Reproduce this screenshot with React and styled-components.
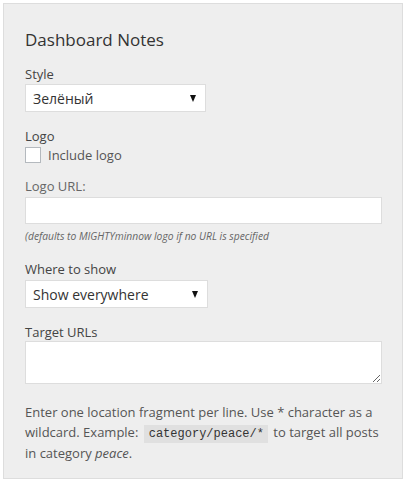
import React from "react";
import styled, { createGlobalStyle } from "styled-components";

const Global = createGlobalStyle`
  html, body { margin: 0; padding: 0; background: #fff; }
  body { font-family: "Open Sans", "Liberation Sans", sans-serif; color: #444; }
  * { box-sizing: border-box; }
`;

const Panel = styled.div`
  margin: 3px;
  width: 400px;
  height: 476px;
  background: #eee;
  border: 1px solid #ddd;
  padding: 24px 21px 0 21px;
`;

const Title = styled.h2`
  margin: 0;
  font-size: 17px;
  line-height: 24px;
  font-weight: 400;
  color: #333;
`;

const Field = styled.div`
  margin-top: ${(p) => p.$mt || 0}px;
  display: flex;
  flex-direction: column;
  align-items: flex-start;
`;

const Label = styled.div`
  font-size: 13px;
  line-height: 18px;
  color: ${(p) => (p.$light ? "#666" : "#444")};
  margin-bottom: ${(p) => p.$mb || 0}px;
`;

const SelectBox = styled.div`
  width: ${(p) => p.$w}px;
  height: 28px;
  background: #fff;
  border: 1px solid #ddd;
  display: flex;
  align-items: center;
  justify-content: space-between;
  padding: 0 9px 0 7px;
  font-size: 14px;
  color: #333;
`;

const Arrow = styled.span`
  width: 0;
  height: 0;
  border-left: 3.5px solid transparent;
  border-right: 3.5px solid transparent;
  border-top: 7px solid #111;
`;

const CheckRow = styled.label`
  display: flex;
  align-items: center;
  gap: 7px;
  font-size: 13px;
  color: #555;
  line-height: 18px;
`;

const Box = styled.span`
  width: 16px;
  height: 16px;
  background: #fff;
  border: 1px solid #b4b9be;
`;

const TextInput = styled.input`
  width: 357px;
  height: 27px;
  background: #fff;
  border: 1px solid #ddd;
  margin: 0;
  outline: none;
`;

const Hint = styled.div`
  font-size: 10.3px;
  font-style: italic;
  color: #666;
  line-height: 15px;
  margin-top: 5px;
`;

const Area = styled.textarea`
  width: 357px;
  height: 43px;
  background: #fff;
  border: 1px solid #ddd;
  margin: 0;
  outline: none;
  display: block;
`;

const Para = styled.p`
  margin: 19px 0 0 0;
  font-size: 13px;
  line-height: 19.5px;
  color: #555;
`;

const Code = styled.code`
  font-family: "Liberation Mono", "DejaVu Sans Mono", monospace;
  font-size: 12px;
  background: #e0e0e0;
  color: #333;
  padding: 2px 4px 2px 5px;
  margin: 0 2px;
`;

export default function App() {
  return (
    <>
      <Global />
      <Panel>
        <Title>Dashboard Notes</Title>
        <Field $mt={13}>
          <Label $mb={1}>Style</Label>
          <SelectBox $w={181}>
            <span>Зелёный</span>
            <Arrow />
          </SelectBox>
        </Field>
        <Field $mt={15}>
          <Label $mb={1}>Logo</Label>
          <CheckRow>
            <Box />
            Include logo
          </CheckRow>
        </Field>
        <Field $mt={13}>
          <Label $light $mb={2}>Logo URL:</Label>
          <TextInput type="text" />
          <Hint>(defaults to MIGHTYminnow logo if no URL is specified</Hint>
        </Field>
        <Field $mt={16}>
          <Label $mb={2}>Where to show</Label>
          <SelectBox $w={183}>
            <span>Show everywhere</span>
            <Arrow />
          </SelectBox>
        </Field>
        <Field $mt={15}>
          <Label $mb={0}>Target URLs</Label>
          <Area />
        </Field>
        <Para>
          Enter one location fragment per line. Use * character as a wildcard. Example: <Code>category/peace/*</Code> to target all posts in category <em>peace</em>.
        </Para>
      </Panel>
    </>
  );
}
